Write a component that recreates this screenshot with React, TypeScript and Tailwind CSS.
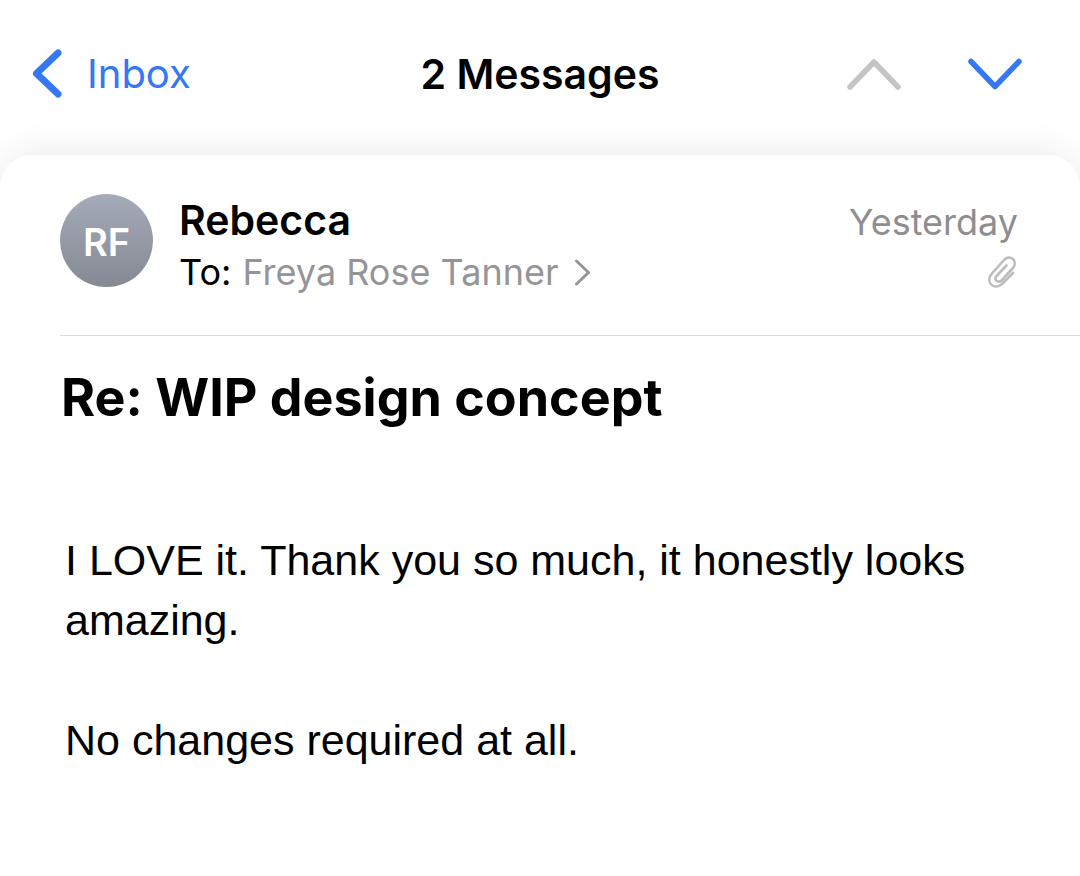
import React from "react";

interface Message {
  sender: string;
  initials: string;
  recipient: string;
  date: string;
  subject: string;
  paragraphs: string[];
}

const message: Message = {
  sender: "Rebecca",
  initials: "RF",
  recipient: "Freya Rose Tanner",
  date: "Yesterday",
  subject: "Re: WIP design concept",
  paragraphs: [
    "I LOVE it. Thank you so much, it honestly looks amazing.",
    "No changes required at all.",
  ],
};

const NavBar: React.FC = () => {
  return (
    <header className="grid grid-cols-3 items-center px-8 pt-12 pb-[55px]">
      <button type="button" className="flex items-center gap-[23px] justify-self-start text-[40px] leading-[52px] text-[#3478f6]">
        <svg width="32" height="50" viewBox="0 0 32 50" fill="none" stroke="currentColor" strokeWidth="7" strokeLinecap="round" strokeLinejoin="round" aria-hidden="true">
          <path d="M26 4L4.5 24.5L26 45" />
        </svg>
        Inbox
      </button>
      <h1 className="justify-self-center text-[41px] leading-[52px] font-semibold whitespace-nowrap">2 Messages</h1>
      <div className="flex items-center gap-[67px] justify-self-end pr-[26px]">
        <button type="button" aria-label="Previous message" disabled className="text-[#c4c4c6]">
          <svg className="block" width="54" height="32" viewBox="0 0 54 32" fill="none" stroke="currentColor" strokeWidth="5.5" strokeLinecap="round" strokeLinejoin="round">
            <path d="M3 29L27 4L51 29" />
          </svg>
        </button>
        <button type="button" aria-label="Next message" className="text-[#3478f6]">
          <svg className="block" width="54" height="32" viewBox="0 0 54 32" fill="none" stroke="currentColor" strokeWidth="5.5" strokeLinecap="round" strokeLinejoin="round">
            <path d="M3 3.5L27 28.500L51 3.5" />
          </svg>
        </button>
      </div>
    </header>
  );
};

const MessageHeader: React.FC<{ message: Message }> = ({ message }) => {
  return (
    <div className="ml-[60px] flex items-start border-b border-[#dcdcdd] pt-[39px] pr-[62px] pb-[37px]">
      <div className="flex size-[93px] shrink-0 items-center justify-center rounded-full bg-linear-to-b from-[#a5abb9] to-[#858992] pt-1 text-[38px] font-semibold text-white">
        {message.initials}
      </div>
      <div className="ml-[26px] flex-1 text-[36px] leading-[52px]">
        <p className="text-[41px] font-semibold">{message.sender}</p>
        <p className="flex items-center">
          To:
          <button type="button" className="ml-[11px] flex items-center gap-4 text-[#959597]">
            {message.recipient}
            <svg width="18" height="28" viewBox="0 0 18 28" fill="none" stroke="currentColor" strokeWidth="3" strokeLinecap="round" strokeLinejoin="round" aria-hidden="true">
              <path d="M2.5 3L14.5 14.5L2.5 26" />
            </svg>
          </button>
        </p>
      </div>
      <div className="flex flex-col items-end gap-1 text-[36px] leading-[56px] text-[#8e8e90]">
        <span>{message.date}</span>
        <svg width="30" height="34" viewBox="0 0 30 34" fill="none" stroke="#bdbdbf" strokeWidth="2.6" strokeLinecap="round" strokeLinejoin="round" role="img" aria-label="Attachment">
          <path d="M25 19L14 30C6 37-3 28 3.500 20L16.500 5.500C22 0 30.500 7 25 14L13.500 26.500C10 29.500 5.500 25.500 8.500 22L18.500 11.500" />
        </svg>
      </div>
    </div>
  );
};

const App: React.FC = () => {
  return (
    <div className="min-h-screen overflow-hidden bg-white font-['Inter','Liberation_Sans',sans-serif] text-black">
      <NavBar />
      <main className="rounded-t-[32px] bg-white shadow-[0_0_40px_rgba(0,0,0,0.09)]">
        <MessageHeader message={message} />
        <article className="pr-16 pb-28">
          <h2 className="pt-8 pl-[61px] text-[52px] leading-[60px] font-bold">{message.subject}</h2>
          <div className="mt-[102px] flex flex-col gap-[60px] pl-[65px] font-['Liberation_Sans',sans-serif] text-[43px] leading-[60px]">
            {message.paragraphs.map((text) => (
              <p key={text}>{text}</p>
            ))}
          </div>
        </article>
      </main>
    </div>
  );
};

export default App;
